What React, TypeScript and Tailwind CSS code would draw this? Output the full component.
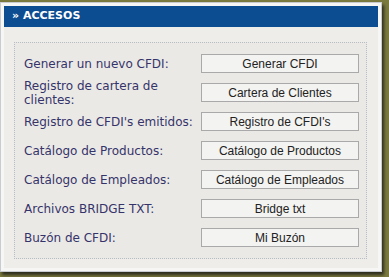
const items = [
  { label: "Generar un nuevo CFDI:", button: "Generar CFDI" },
  { label: "Registro de cartera de clientes:", button: "Cartera de Clientes" },
  { label: "Registro de CFDI's emitidos:", button: "Registro de CFDI's" },
  { label: "Catálogo de Productos:", button: "Catálogo de Productos" },
  { label: "Catálogo de Empleados:", button: "Catálogo de Empleados" },
  { label: "Archivos BRIDGE TXT:", button: "Bridge txt" },
  { label: "Buzón de CFDI:", button: "Mi Buzón" },
];

export default function App() {
  return (
    <div className="w-[389px] h-[277px] bg-[#7b7a3e] pt-[2px] overflow-hidden">
      <div className="w-[382px] h-[270px] bg-[#f6f6f4] border border-[#c8ccd2] p-[3px] flex flex-col shadow-[2px_3px_3px_rgba(20,20,20,0.75)]">
        {/* Header */}
        <div className="h-[21px] bg-[#0c4c91] flex items-center pl-[8px] flex-shrink-0">
          <span className="text-white font-bold text-[11px] font-['DejaVu_Sans',sans-serif]">» ACCESOS</span>
        </div>

        {/* Panel */}
        <div className="flex-1 bg-[#eeedea] pt-[15px] pl-[10px] pr-[11px] pb-[9px]">
          <div className="h-full border border-dotted border-[#b8bcc4] bg-[#ebe9e6] pt-[6px] pl-[9px] pr-[7px]">
            {items.map((it) => (
              <div key={it.button} className="h-[29px] flex items-center">
                <div className="w-[178px] pr-[8px] text-[12px] leading-[14px] text-[#35346a] font-['DejaVu_Sans',sans-serif]">
                  {it.label}
                </div>
                <button className="w-[159px] h-[19px] bg-[#f3f3f1] border border-[#a9a9a9] text-[12px] text-[#222222] font-['Liberation_Sans',Arial,sans-serif] leading-none">
                  {it.button}
                </button>
              </div>
            ))}
          </div>
        </div>
      </div>
    </div>
  );
}
